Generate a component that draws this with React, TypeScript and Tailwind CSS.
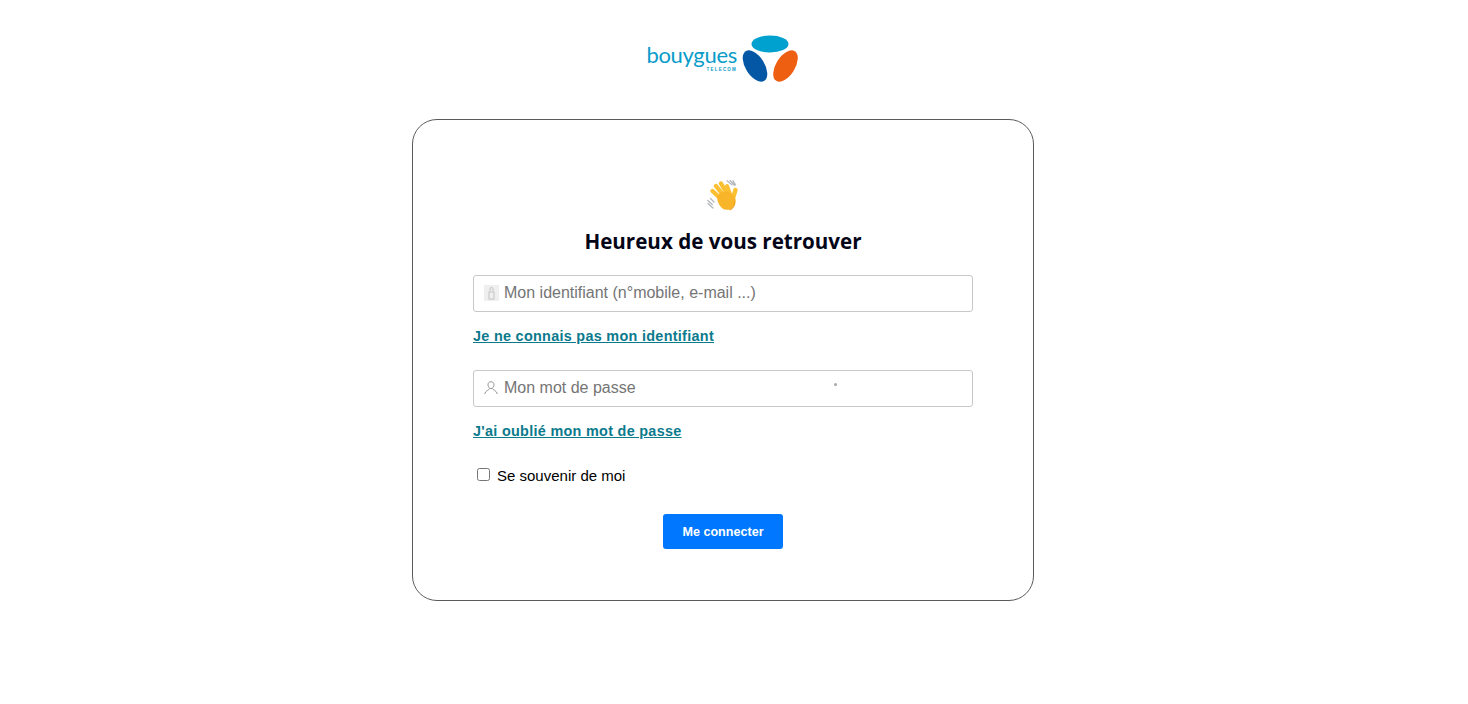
function Logo() {
  return (
    <div className="flex h-[47px] w-[150px] items-start">
      <div className="flex w-[92px] shrink-0 flex-col items-end pt-[6px] pr-[3px]">
        <span className="font-['Lato',sans-serif] text-[22px] leading-[27px] font-normal tracking-[-0.3px] text-[#0a9cc9]">
          bouygues
        </span>
        <span className="font-['Liberation_Sans',sans-serif] text-[4.5px] leading-[4px] font-bold tracking-[1.2px] text-[#0a9cc9]">
          TELECOM
        </span>
      </div>
      <svg width="58" height="47" viewBox="0 0 58 47" className="shrink-0">
        <ellipse cx="30" cy="9" rx="18.5" ry="8.5" fill="#00a0cf" />
        <ellipse cx="15" cy="31" rx="9.5" ry="17.5" transform="rotate(-32 15 31)" fill="#0457a5" />
        <ellipse cx="45.500" cy="31" rx="9.5" ry="17.5" transform="rotate(32 45.500 31)" fill="#ee5f12" />
      </svg>
    </div>
  );
}

function WaveHand() {
  return (
    <svg width="32" height="32" viewBox="0 0 32 32">
      <g stroke="#b4b7bb" strokeWidth="1.3" strokeLinecap="round" fill="none">
        <path d="M.8 20.500l4.500 4M1 23.500l5 4.500M3.500 18.500l3.500 3.500" />
        <path d="M20 .8l5 4M23 .3l4.500 5M26 .8l2.500 4" />
      </g>
      <g stroke="#fbbf32" strokeLinecap="round" fill="none">
        <path d="M5.500 11l8.500 8" strokeWidth="4.4" />
        <path d="M9 6l8 10" strokeWidth="4.4" />
        <path d="M14 3.500l6.500 11" strokeWidth="4.4" />
        <path d="M20 6l3 8" strokeWidth="4" />
        <path d="M28.500 10l-2.500 8" strokeWidth="4.4" />
      </g>
      <path
        d="M10.500 16c2-4 8-6 12-3.500 3 1.500 5 4 6 6.500 1 5-1.500 9.500-6 10.500-5 1-8-1-10-4.500-1.500-2.500-3-6-2-9z"
        fill="#f9b52a"
      />
      <path d="M22.500 29.500c3.500-1 5.500-5 5-10.500 1.500 5-.5 10.500-5.500 11.500z" fill="#e99a1c" />
    </svg>
  );
}

function IdIcon() {
  return (
    <div className="absolute top-[10px] left-[11px] flex h-[16px] w-[15px] items-center justify-center bg-[#efefef]">
      <svg width="9" height="14" viewBox="0 0 9 14" fill="none" stroke="#c4c4c4" strokeWidth="1">
        <path d="M3 5V3a1.500 1.500 0 0 1 3 0v2" />
        <rect x="2" y="6" width="5" height="7" />
      </svg>
    </div>
  );
}

function UserIcon() {
  return (
    <svg
      width="14"
      height="14"
      viewBox="0 0 14 14"
      fill="none"
      stroke="#8a8a8a"
      strokeWidth="0.9"
      className="absolute top-[11px] left-[11px]"
    >
      <path d="M7 .8c-2 0-3 1.200-3 3s1 3.700 3 3.700 3-1.900 3-3.700-1-3-3-3z" />
      <path d="M5.500 7.500c0 1.500-4.300 2-4.800 5.500M8.500 7.500c0 1.500 4.300 2 4.800 5.500" />
    </svg>
  );
}

export default function App() {
  return (
    <div className="min-h-[704px] w-[1446px] bg-white font-['Liberation_Sans',Arial,sans-serif]">
      <div className="flex justify-center pt-[35px]">
        <Logo />
      </div>
      <div className="mx-auto mt-[37px] flex h-[482px] w-[622px] flex-col rounded-[25px] border border-[#5a5a5a] px-[60px] pt-[60px]">
        <div className="flex justify-center">
          <WaveHand />
        </div>
        <h1 className="mt-[16px] text-center font-['Open_Sans',sans-serif] text-[20.6px] leading-[27px] font-bold text-[#050518]">
          Heureux de vous retrouver
        </h1>
        <div className="relative mt-[20px]">
          <IdIcon />
          <input
            readOnly
            placeholder="Mon identifiant (n°mobile, e-mail ...)"
            className="block h-[37px] w-full rounded-[3px] border border-[#c8c8c8] pb-[2px] pl-[30px] text-[16px] outline-none placeholder:text-[#757575]"
          />
        </div>
        <a href="#" className="mt-[15px] self-start text-[14.4px] leading-[18px] font-bold tracking-[0.3px] text-[#0b7a8d] underline">
          Je ne connais pas mon identifiant
        </a>
        <div className="relative mt-[25px]">
          <UserIcon />
          <input
            readOnly
            placeholder="Mon mot de passe"
            className="block h-[37px] w-full rounded-[3px] border border-[#c8c8c8] pb-[2px] pl-[30px] text-[16px] outline-none placeholder:text-[#757575]"
          />
          <span className="absolute top-[13px] left-[361px] h-[3px] w-[3px] rounded-full bg-[#a8a8a8]" />
        </div>
        <a href="#" className="mt-[15px] self-start text-[14.4px] leading-[18px] font-bold tracking-[0.3px] text-[#0b7a8d] underline">
          J'ai oublié mon mot de passe
        </a>
        <label className="mt-[25px] flex items-center pl-[4px] text-[15px] leading-[18px] text-black">
          <input type="checkbox" className="m-0 h-[13px] w-[13px]" />
          <span className="ml-[7px] translate-y-[2px]">Se souvenir de moi</span>
        </label>
        <button className="mt-[31px] h-[35px] w-[120px] self-center rounded-[3px] bg-[#0077ff] pt-[2px] text-[12.6px] font-bold text-white">
          Me connecter
        </button>
      </div>
    </div>
  );
}
